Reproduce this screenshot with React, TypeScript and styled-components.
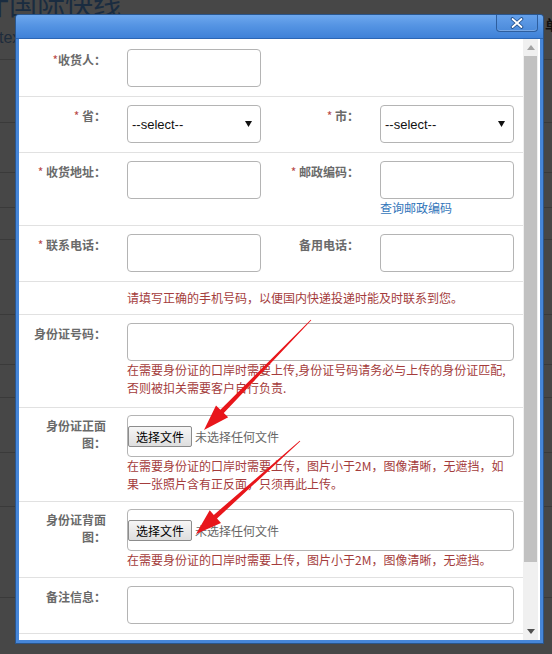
import React from 'react';
import styled, { createGlobalStyle } from 'styled-components';

const GlobalStyle = createGlobalStyle`
    html, body {
        margin: 0;
        padding: 0;
        background: #474747;
    }
    body {
        font-family: 'Noto Sans CJK SC', 'Liberation Sans', sans-serif;
        font-size: 12px;
    }
`;

interface ArrowSpec {
    x1: number;
    y1: number;
    x2: number;
    y2: number;
}

// tapered annotation arrow, thin at the tail and thick near the head
const arrowPoints = ({ x1, y1, x2, y2 }: ArrowSpec) => {
    const dx = x2 - x1;
    const dy = y2 - y1;
    const len = Math.hypot(dx, dy);
    const ux = dx / len;
    const uy = dy / len;
    const nx = -uy;
    const ny = ux;
    const head = 26;
    const hw = 8.5;
    const sw = 2.4;
    const tw = 0.4;
    const bx = x2 - head * ux;
    const by = y2 - head * uy;
    const p = (x: number, y: number) => `${x.toFixed(1)},${y.toFixed(1)}`;
    return [
        p(x1 + tw * nx, y1 + tw * ny),
        p(bx + sw * nx, by + sw * ny),
        p(bx + hw * nx, by + hw * ny),
        p(x2, y2),
        p(bx - hw * nx, by - hw * ny),
        p(bx - sw * nx, by - sw * ny),
        p(x1 - tw * nx, y1 - tw * ny),
    ].join(' ');
};

const arrows: ArrowSpec[] = [
    { x1: 311, y1: 320, x2: 204, y2: 430 },
    { x1: 300, y1: 441, x2: 196, y2: 534 },
];

const bgRows = [15, 63, 50, 35, 32, 75, 50, 33, 55, 54, 91];

const idHint =
    '在需要身份证的口岸时需要上传,身份证号码请务必与上传的身份证匹配,否则被扣关需要客户自行负责.';
const frontHint =
    '在需要身份证的口岸时需要上传，图片小于2M，图像清晰，无遮挡，如果一张照片含有正反面，只须再此上传。';
const backHint = '在需要身份证的口岸时需要上传，图片小于2M，图像清晰，无遮挡。';

const Select = () => (
    <SelectBox>
        <span>--select--</span>
        <svg width="7" height="6" viewBox="0 0 7 6">
            <path d="M0 0 H7 L3.5 6 Z" fill="#111" />
        </svg>
    </SelectBox>
);

const FilePicker = () => (
    <FileBox>
        <FileButton type="button">选择文件</FileButton>
        <FileName>未选择任何文件</FileName>
    </FileBox>
);

const App = () => {
    return (
        <Screen>
            <GlobalStyle />
            <BgPage>
                <BgTop>
                    <BgTitle>计国际快线</BgTitle>
                    <BgSide>单</BgSide>
                </BgTop>
                <BgSub>text</BgSub>
                {bgRows.map((h, i) => (
                    <BgRow key={i} $h={h} />
                ))}
            </BgPage>

            <Dialog>
                <TitleBar>
                    <CloseButton type="button" aria-label="close">
                        <svg width="14" height="12" viewBox="0 0 14 12">
                            <path
                                d="M2.5 2 L11.5 10 M11.5 2 L2.5 10"
                                stroke="#214f8c"
                                strokeWidth="3.6"
                                strokeLinecap="round"
                            />
                            <path
                                d="M2.5 2 L11.5 10 M11.5 2 L2.5 10"
                                stroke="#fff"
                                strokeWidth="1.8"
                                strokeLinecap="round"
                            />
                        </svg>
                    </CloseButton>
                </TitleBar>
                <Body>
                    <FormPane>
                        <Row $pt={10}>
                            <Field>
                                <Label>
                                    <Star>*</Star>收货人：
                                </Label>
                                <Input />
                            </Field>
                        </Row>
                        <Row>
                            <Field>
                                <Label>
                                    <Star>* </Star>省：
                                </Label>
                                <Select />
                            </Field>
                            <Field>
                                <Label>
                                    <Star>* </Star>市：
                                </Label>
                                <Select />
                            </Field>
                        </Row>
                        <Row $pb={8}>
                            <Field>
                                <Label>
                                    <Star>* </Star>收货地址：
                                </Label>
                                <Input />
                            </Field>
                            <Field>
                                <Label>
                                    <Star>* </Star>邮政编码：
                                </Label>
                                <Control>
                                    <Input />
                                    <Link href="#">查询邮政编码</Link>
                                </Control>
                            </Field>
                        </Row>
                        <Row>
                            <Field>
                                <Label>
                                    <Star>* </Star>联系电话：
                                </Label>
                                <Input />
                            </Field>
                            <Field>
                                <Label>备用电话：</Label>
                                <Input />
                            </Field>
                        </Row>
                        <Row $pt={7} $pb={7}>
                            <Field>
                                <Label />
                                <Hint $nowrap>
                                    请填写正确的手机号码，以便国内快递投递时能及时联系到您。
                                </Hint>
                            </Field>
                        </Row>
                        <Row $pb={10}>
                            <Field>
                                <Label>身份证号码：</Label>
                                <Control>
                                    <Input $wide />
                                    <Hint>{idHint}</Hint>
                                </Control>
                            </Field>
                        </Row>
                        <Row $pt={7} $pb={8}>
                            <Field>
                                <Label>身份证正面图：</Label>
                                <Control>
                                    <FilePicker />
                                    <Hint>{frontHint}</Hint>
                                </Control>
                            </Field>
                        </Row>
                        <Row $pt={7} $pb={8}>
                            <Field>
                                <Label>身份证背面图：</Label>
                                <Control>
                                    <FilePicker />
                                    <Hint>{backHint}</Hint>
                                </Control>
                            </Field>
                        </Row>
                        <Row>
                            <Field>
                                <Label>备注信息：</Label>
                                <Input $wide />
                            </Field>
                        </Row>
                    </FormPane>
                    <ScrollTrack>
                        <ScrollArrow>
                            <svg width="8" height="5" viewBox="0 0 8 5">
                                <path d="M0 5 L4 0 L8 5 Z" fill="#a3a3a3" />
                            </svg>
                        </ScrollArrow>
                        <ScrollThumb />
                        <ScrollSpacer />
                        <ScrollArrow>
                            <svg width="8" height="5" viewBox="0 0 8 5">
                                <path d="M0 0 L8 0 L4 5 Z" fill="#505050" />
                            </svg>
                        </ScrollArrow>
                    </ScrollTrack>
                </Body>
            </Dialog>

            <Annotations width="552" height="654" viewBox="0 0 552 654">
                {arrows.map((a, i) => (
                    <polygon key={i} points={arrowPoints(a)} fill="#e8161b" />
                ))}
            </Annotations>
        </Screen>
    );
};

interface RowProps {
    $pt?: number;
    $pb?: number;
}

const Screen = styled.div`
    position: relative;
    width: 552px;
    height: 654px;
    overflow: hidden;
    background: #474747;
`;

const BgPage = styled.div`
    display: flex;
    flex-direction: column;
`;

const BgTop = styled.div`
    display: flex;
    justify-content: space-between;
    align-items: flex-start;
    height: 30px;
`;

const BgTitle = styled.div`
    margin: -13px 0 0 -19px;
    font-size: 28px;
    line-height: 32px;
    color: #1a2c40;
    white-space: nowrap;
`;

const BgSide = styled.div`
    margin: 14px -7px 0 0;
    font-size: 14px;
    font-weight: bold;
    color: #111;
`;

const BgSub = styled.div`
    margin-left: -1px;
    height: 15px;
    font-family: 'Liberation Sans', sans-serif;
    font-size: 16px;
    line-height: 15px;
    color: #1e2c3c;
`;

const BgRow = styled.div<{ $h: number }>`
    height: ${(p) => p.$h - 1}px;
    border-bottom: 1px solid #3a3a3a;
`;

const Dialog = styled.div`
    position: absolute;
    left: 16px;
    top: 15px;
    width: 527px;
    height: 628px;
    display: flex;
    flex-direction: column;
    background: #4686d9;
    border-radius: 3px 3px 0 0;
    box-shadow: 0 0 0 1px #2a568d;
`;

const TitleBar = styled.div`
    flex: none;
    height: 23px;
    display: flex;
    justify-content: flex-end;
    padding-right: 5px;
    border-radius: 3px 3px 0 0;
    border-bottom: 1px solid #2c66b4;
    background: linear-gradient(#6ea8ee, #5594e3 45%, #3f81d8);
`;

const CloseButton = styled.button`
    width: 42px;
    height: 17px;
    padding: 0;
    display: flex;
    align-items: center;
    justify-content: center;
    border: 1px solid #2e5e9e;
    border-top: none;
    border-radius: 0 0 4px 4px;
    background: linear-gradient(#64a0ea, #4b8ada);
    box-shadow: inset 0 -1px 0 rgba(255, 255, 255, 0.25);
`;

const Body = styled.div`
    flex: 1;
    display: flex;
    margin: 0 3px 3px 3px;
    padding-right: 2px;
    background: #fff;
    overflow: hidden;
`;

const FormPane = styled.div`
    width: 504px;
    overflow: hidden;
`;

const Row = styled.div<RowProps>`
    display: flex;
    padding: ${(p) => p.$pt ?? 8}px 0 ${(p) => p.$pb ?? 9}px;
    border-bottom: 1px solid #e1e1e1;
`;

const Field = styled.div`
    display: flex;
    align-items: flex-start;
    width: 253px;
    flex: none;
    &:only-child {
        width: auto;
    }
`;

const Label = styled.div`
    flex: none;
    box-sizing: border-box;
    width: 87px;
    padding: 2px 0 0 9px;
    margin-right: 21px;
    text-align: right;
    font-weight: bold;
    font-size: 12px;
    line-height: 17px;
    color: #6a6a6a;
`;

const Star = styled.span`
    font-weight: normal;
    color: #b94a48;
    white-space: pre;
`;

const Control = styled.div`
    display: flex;
    flex-direction: column;
`;

const Input = styled.div<{ $wide?: boolean }>`
    box-sizing: border-box;
    width: ${(p) => (p.$wide ? '387px' : '134px')};
    height: 38px;
    border: 1px solid #b4b4b4;
    border-radius: 4px;
    background: #fff;
`;

const SelectBox = styled.div`
    box-sizing: border-box;
    width: 134px;
    height: 38px;
    display: flex;
    align-items: center;
    justify-content: space-between;
    padding: 0 8px 0 4px;
    border: 1px solid #b4b4b4;
    border-radius: 4px;
    font-family: 'Liberation Sans', sans-serif;
    font-size: 13px;
    color: #111;
`;

const Link = styled.a`
    font-size: 12px;
    line-height: 18px;
    color: #3376ba;
    text-decoration: none;
`;

const Hint = styled.div<{ $nowrap?: boolean }>`
    width: 387px;
    font-size: 12px;
    line-height: 18px;
    color: #a43c3c;
    white-space: ${(p) => (p.$nowrap ? 'nowrap' : 'normal')};
`;

const FileBox = styled.div`
    box-sizing: border-box;
    width: 387px;
    height: 42px;
    display: flex;
    align-items: center;
    border: 1px solid #b4b4b4;
    border-radius: 4px;
`;

const FileButton = styled.button`
    box-sizing: border-box;
    width: 64px;
    height: 21px;
    padding: 0;
    border: 1px solid #8c8c8c;
    border-radius: 2px;
    background: linear-gradient(#f6f6f6, #dedede);
    font-family: 'Noto Sans CJK SC', sans-serif;
    font-size: 12px;
    line-height: 19px;
    color: #000;
`;

const FileName = styled.span`
    margin-left: 3px;
    font-size: 12px;
    color: #666;
`;

const ScrollTrack = styled.div`
    width: 15px;
    flex: none;
    display: flex;
    flex-direction: column;
    background: #f0f0f0;
`;

const ScrollArrow = styled.div`
    height: 17px;
    flex: none;
    display: flex;
    align-items: center;
    justify-content: center;
`;

const ScrollThumb = styled.div`
    height: 506px;
    margin: 0 1px;
    background: #c1c1c1;
`;

const ScrollSpacer = styled.div`
    flex: 1;
`;

const Annotations = styled.svg`
    position: absolute;
    left: 0;
    top: 0;
    pointer-events: none;
`;

export default App;
